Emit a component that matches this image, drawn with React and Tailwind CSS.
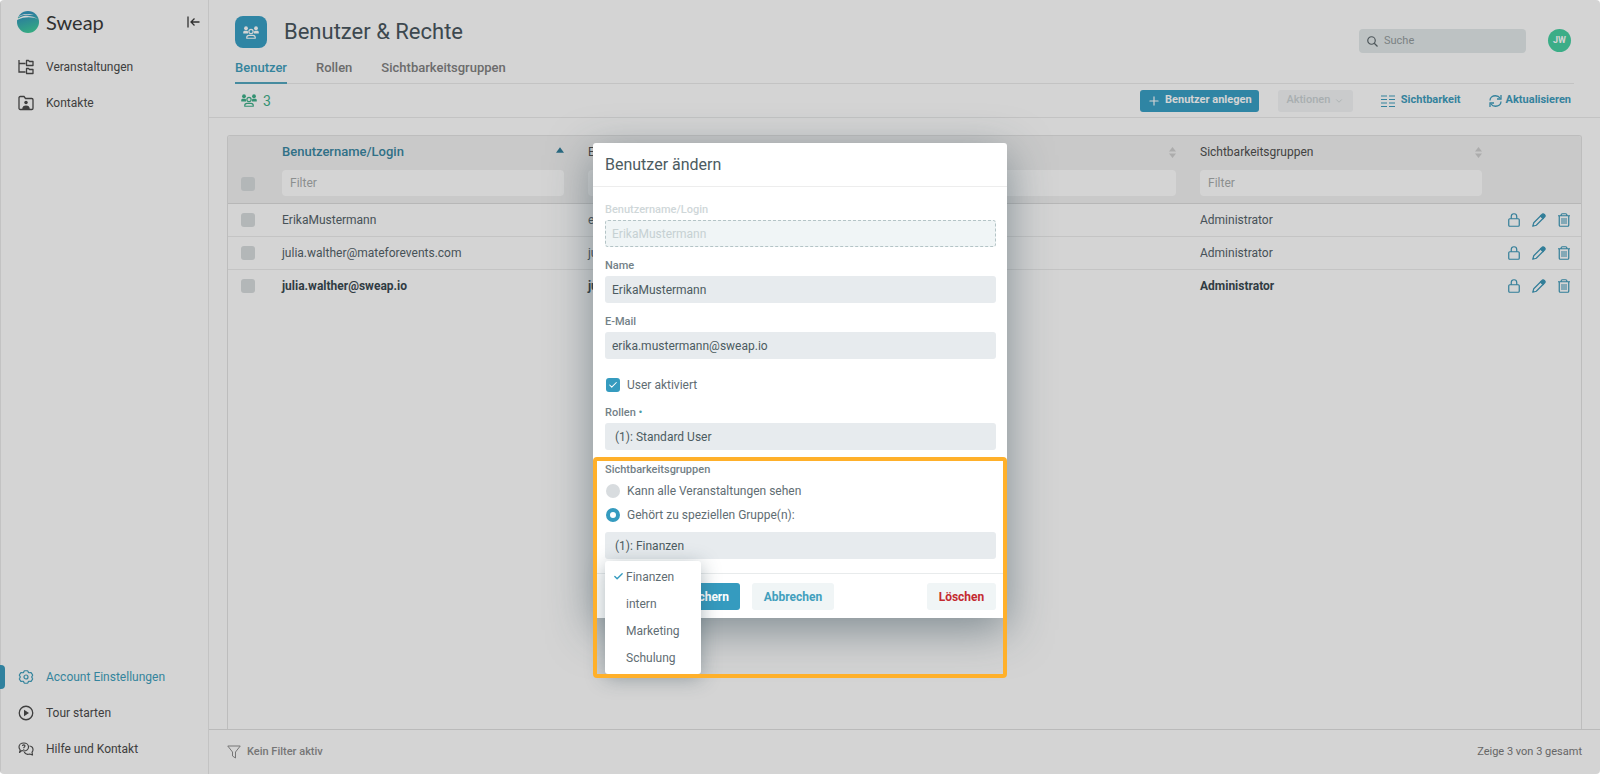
import React, { useState } from 'react';
import { ChevronDown, Plus, Check } from 'lucide-react';

const UsersIcon = ({ className }) => (
  <svg className={className} viewBox="0 0 32 26" fill="none">
    <g fill="currentColor">
      <circle cx="6" cy="4.5" r="3.8" />
      <circle cx="26" cy="4.5" r="3.8" />
      <path d="M0.5 15v-2.5C0.5 10.5 2 9.6 4 9.6h4.5L10 11v4z" />
      <path d="M31.500 15v-2.5c0-2-1.500-2.900-3.500-2.900h-4.500L22 11v4z" />
    </g>
    <circle cx="16" cy="11" r="4.200" stroke="currentColor" strokeWidth="2.400" />
    <path d="M7.500 24.500v-1.500c0-2.600 2-4.200 4.500-4.200h8c2.500 0 4.500 1.600 4.500 4.200v1.500z" stroke="currentColor" strokeWidth="2.400" strokeLinejoin="round" />
  </svg>
);

const SweapLogo = () => (
  <svg className="size-[22px]" viewBox="0 0 44 44">
    <defs>
      <linearGradient id="globe" x1="0.3" y1="0" x2="0.6" y2="1">
        <stop offset="0.2" stopColor="#3498bd" />
        <stop offset="1" stopColor="#41cf9c" />
      </linearGradient>
    </defs>
    <circle cx="22" cy="22" r="22" fill="url(#globe)" />
    <path d="M0 14C8 5 20 4 34 8c-8-.5-14 0-19 2 11-1 20 1 28 7-10-5-26-7-43 1z" fill="#fff" />
    <path d="M2 13C9 8 16 7 24 8 15 9 8 11 2 15z" fill="url(#globe)" />
  </svg>
);

const CollapseIcon = () => (
  <svg className="h-3 w-[13px]" viewBox="0 0 26 24" fill="none" stroke="currentColor" strokeWidth="2.600">
    <path d="M2 1v22M25 12H8M15 5l-7 7 7 7" />
  </svg>
);

const EventsIcon = () => (
  <svg className="size-4" viewBox="0 0 32 32" fill="none" stroke="currentColor" strokeWidth="2.600">
    <path d="M2 2v24h13M2 9h13" />
    <path d="M17 3h4l2 2h7v8H17zM17 19h4l2 2h7v8H17z" strokeLinejoin="round" />
  </svg>
);

const ContactsIcon = () => (
  <svg className="size-4" viewBox="0 0 32 32" fill="none">
    <path d="M2 5.500C2 4 3 3 4.500 3H12l3 4h12.500C29 7 30 8 30 9.500v17c0 1.500-1 2.500-2.500 2.500h-23C3 29 2 28 2 26.500z" stroke="currentColor" strokeWidth="2.600" />
    <circle cx="16" cy="15" r="3.500" fill="currentColor" />
    <path d="M8.500 28c0-5 3-7 7.500-7s7.500 2 7.500 7z" fill="currentColor" />
  </svg>
);

const GearIcon = () => (
  <svg className="size-4" viewBox="0 0 32 32" fill="none" stroke="currentColor" strokeWidth="2.400" strokeLinejoin="round">
    <path d="M13 3.500h6c1 0 1 3 2.500 3.800 1.500.8 4-.8 4.800 0l3 4.700c.5 1-1.800 2.500-1.800 4s2.300 3 1.800 4l-3 4.700c-.8.8-3.300-.8-4.800 0-1.500.8-1.500 3.800-2.500 3.800h-6c-1 0-1-3-2.500-3.800-1.500-.8-4 .8-4.800 0l-3-4.700c-.5-1 1.800-2.500 1.800-4s-2.300-3-1.800-4l3-4.700c.8-.8 3.300.8 4.800 0C12 6.500 12 3.500 13 3.500z" />
    <circle cx="16" cy="16" r="4" />
  </svg>
);

const PlayIcon = () => (
  <svg className="size-4" viewBox="0 0 32 32" fill="none">
    <circle cx="16" cy="16" r="13.500" stroke="currentColor" strokeWidth="2.600" />
    <path d="M12 9.500v13L22 16z" fill="currentColor" />
  </svg>
);

const HelpIcon = () => (
  <svg className="size-4" viewBox="0 0 32 32" fill="none" stroke="currentColor" strokeWidth="2.300" strokeLinejoin="round">
    <path d="M3 23l1.500-5C2.500 15.500 2 14 2 12c0-4.500 4-8 9.500-8S21 7.500 21 12s-4 8-9.500 8c-2 0-3-.3-4-.8z" />
    <path d="M23 10c4 .5 7 3.500 7 7.500 0 2-.5 3.500-2 5l1 5.500-5.500-2c-5 1.500-9.500-.5-11-4" />
    <path d="M9 10c0-3 5-3 5 0 0 1.500-2.500 2-2.500 4M11.500 15.500v1.800" />
  </svg>
);

const ColumnsIcon = () => (
  <svg className="h-3 w-[14px]" viewBox="0 0 28 24" stroke="currentColor" strokeWidth="2.200">
    <path d="M0 2h12M16 2h12M0 9h12M16 9h12M0 16h12M16 16h12M0 23h12M16 23h12" />
  </svg>
);

const RefreshIcon = () => (
  <svg className="h-3 w-[13px]" viewBox="0 0 26 24" fill="none" stroke="currentColor" strokeWidth="2.600">
    <path d="M2 11C2 5 7 1.500 13 1.500c4 0 7 1.500 9 4.500M24 13c0 6-5 9.500-11 9.500-4 0-7-1.500-9-4.500" />
    <path d="M24 0v8h-8M2 24v-8h8" />
  </svg>
);

const LockIcon = () => (
  <svg className="h-[14px] w-3" viewBox="0 0 24 28" fill="none" stroke="currentColor" strokeWidth="2.400">
    <rect x="1.500" y="11.500" width="21" height="15" rx="2" />
    <path d="M6.500 11.500V7c0-3.500 2-5.500 5.500-5.500S17.500 3.500 17.500 7v4.500" />
  </svg>
);

const PencilIcon = () => (
  <svg className="size-[14px]" viewBox="0 0 28 28" fill="none" stroke="currentColor" strokeWidth="2.400" strokeLinejoin="round">
    <path d="M1.500 26.500l2-7L18 5l5 5L8.500 24.500z" />
    <path d="M17 6l4-4c2-1.500 6.500 2.500 5 5l-4 4z" fill="currentColor" />
  </svg>
);

const TrashIcon = () => (
  <svg className="h-[14px] w-3" viewBox="0 0 24 28" fill="none" stroke="currentColor" strokeWidth="2.400">
    <path d="M0 5.500h24M6 5c0-2.500 1-3.500 3-3.500h6c2 0 3 1 3 3.500M2.500 6v18.500c0 1.500.5 2 2 2h15c1.500 0 2-.5 2-2V6" />
    <path d="M8 10v12M12 10v12M16 10v12" strokeWidth="2" />
  </svg>
);

const FilterIcon = () => (
  <svg className="size-[14px]" viewBox="0 0 28 28" fill="none" stroke="currentColor" strokeWidth="2" strokeLinejoin="round">
    <path d="M1.500 2h25L17 14v12l-6-4v-8z" />
  </svg>
);

const SearchIcon = () => (
  <svg className="size-[11px]" viewBox="0 0 22 22" fill="none" stroke="currentColor" strokeWidth="2.400">
    <circle cx="9" cy="9" r="7.500" />
    <path d="M14.500 14.500L21 21" />
  </svg>
);

const SortIcon = () => (
  <svg className="h-[11px] w-[7px] text-[#cfcfcf]" viewBox="0 0 14 22" fill="currentColor">
    <path d="M7 0l7 9H0zM7 22l7-9H0z" />
  </svg>
);

const topNav = [
  { label: 'Veranstaltungen', icon: EventsIcon },
  { label: 'Kontakte', icon: ContactsIcon },
];

const bottomNav = [
  { label: 'Account Einstellungen', icon: GearIcon, active: true },
  { label: 'Tour starten', icon: PlayIcon },
  { label: 'Hilfe und Kontakt', icon: HelpIcon },
];

const columns = ['Benutzername/Login', 'E-Mail', 'Rollen', 'Sichtbarkeitsgruppen'];

const users = [
  { login: 'ErikaMustermann', email: 'erika.mustermann@sweap.io', role: 'Standard User', group: 'Administrator' },
  { login: 'julia.walther@mateforevents.com', email: 'julia.walther@mateforevents.com', role: 'Administrator', group: 'Administrator' },
  { login: 'julia.walther@sweap.io', email: 'julia.walther@sweap.io', role: 'Administrator', group: 'Administrator', current: true },
];

const groups = ['Finanzen', 'intern', 'Marketing', 'Schulung'];

const NavItem = ({ label, icon: Icon, active }) => (
  <a
    href="#"
    className={`relative flex h-9 items-center gap-3 pl-[17px] text-xs ${active ? 'text-[#3f9fbd]' : 'text-[#4c4c4c]'}`}
  >
    {active && <span className="absolute inset-y-[6px] -left-px w-[5px] rounded-r-sm bg-[#3a9cbf]" />}
    <Icon />
    {label}
  </a>
);

const Sidebar = () => (
  <aside className="flex w-[209px] shrink-0 flex-col border-x border-[#ebebeb]">
    <div className="flex items-center justify-between pt-[11px] pr-2 pl-4 text-[#3c3c3c]">
      <div className="flex items-center gap-[7px]">
        <SweapLogo />
        <span className="font-[Lato,sans-serif] text-xl leading-[22px]">Sweap</span>
      </div>
      <button type="button" aria-label="Menü einklappen"><CollapseIcon /></button>
    </div>
    <nav className="mt-4">
      {topNav.map(item => <NavItem key={item.label} {...item} />)}
    </nav>
    <nav className="mt-auto mb-[7px]">
      {bottomNav.map(item => <NavItem key={item.label} {...item} />)}
    </nav>
  </aside>
);

const RowCheckbox = ({ label }) => (
  <input type="checkbox" aria-label={label} className="block size-[14px] appearance-none rounded-[3px] bg-[#d8dcde]" />
);

const UserTable = () => (
  <table className="w-full table-fixed text-left text-xs">
    <thead className="bg-[#f2f2f2]">
      <tr className="border-b border-[#dcdcdc]">
        <th className="w-[54px] pt-[29px] pl-[13px]"><RowCheckbox label="Alle auswählen" /></th>
        {columns.map((name, i) => (
          <th key={name} className="pt-2 pr-6 pb-[7px] font-normal text-[#505050]">
            <div className="flex h-4 items-center justify-between">
              {i === 0 ? (
                <>
                  <span className="text-[13px] font-medium text-[#3a88a3]">{name}</span>
                  <svg className="mb-[5px] h-[6px] w-2 text-[#327f9b]" viewBox="0 0 14 10" fill="currentColor"><path d="M7 0l7 10H0z" /></svg>
                </>
              ) : (
                <>
                  <span>{name}</span>
                  <SortIcon />
                </>
              )}
            </div>
            <input
              aria-label={`${name} filtern`}
              placeholder="Filter"
              className="mt-[10px] block h-[26px] w-full rounded-sm bg-white px-2 placeholder:text-[#a9adad]"
            />
          </th>
        ))}
        <th className="w-[75px]"></th>
      </tr>
    </thead>
    <tbody>
      {users.map(user => (
        <tr
          key={user.login}
          className={`h-[33px] ${user.current ? 'font-bold text-[#3a4951]' : 'border-b border-[#ececec] text-[#55636a]'}`}
        >
          <td className="pl-[13px]"><RowCheckbox label={`${user.login} auswählen`} /></td>
          <td>{user.login}</td>
          <td>{user.email}</td>
          <td>{user.role}</td>
          <td>{user.group}</td>
          <td>
            <div className="flex items-center gap-3 pl-[2px] text-[#3d98b8]">
              <button type="button" aria-label="Sperren"><LockIcon /></button>
              <button type="button" aria-label="Bearbeiten"><PencilIcon /></button>
              <button type="button" aria-label="Löschen"><TrashIcon /></button>
            </div>
          </td>
        </tr>
      ))}
    </tbody>
  </table>
);

const fieldClass = 'block h-[27px] w-full appearance-none rounded-[3px] bg-[#e7ebee] text-left text-xs text-[#4c5b61]';
const labelClass = 'mb-[2px] block text-[11px] leading-4 font-medium text-[#738187]';

const EditUserDialog = () => {
  const [group, setGroup] = useState('Finanzen');
  const [allEvents, setAllEvents] = useState(false);

  return (
    <div
      role="dialog"
      aria-labelledby="dialog-title"
      className="relative w-[414px] rounded-[3px] bg-white shadow-[0_12px_44px_rgba(45,70,82,0.5)]"
    >
      <h2 id="dialog-title" className="flex h-[44px] items-center border-b border-[#ededed] px-3 text-base text-[#4c5b61]">
        Benutzer ändern
      </h2>

      <form className="pt-[15px] pr-[11px] pl-3">
        <div className="space-y-[11px]">
          <div>
            <label htmlFor="login" className="mb-[2px] block text-[11px] leading-4 font-medium text-[#cfd7d9]">Benutzername/Login</label>
            <input
              id="login"
              disabled
              defaultValue="ErikaMustermann"
              className="block h-[27px] w-full rounded-[3px] border border-dashed border-[#b4c4c6] bg-[#f0f5f6] px-[6px] text-xs text-[#c6d1d3]"
            />
          </div>
          <div>
            <label htmlFor="name" className={labelClass}>Name</label>
            <input id="name" defaultValue="ErikaMustermann" className={`${fieldClass} px-[7px]`} />
          </div>
          <div>
            <label htmlFor="email" className={labelClass}>E-Mail</label>
            <input id="email" defaultValue="erika.mustermann@sweap.io" className={`${fieldClass} px-[7px]`} />
          </div>
        </div>

        <label className="mt-4 flex h-5 items-center gap-[7px] text-xs text-[#5f6d73]">
          <span className="grid">
            <input type="checkbox" defaultChecked className="peer col-start-1 row-start-1 ml-px size-[14px] appearance-none rounded-[3px] bg-[#d8dcdf] checked:bg-[#359bbf]" />
            <Check className="pointer-events-none invisible col-start-1 row-start-1 ml-[3px] size-[10px] self-center text-white peer-checked:visible" strokeWidth={2.5} />
          </span>
          User aktiviert
        </label>

        <div className="mt-[10px]">
          <label htmlFor="roles" className={labelClass}>Rollen <span className="text-[#4f9aa5]">•</span></label>
          <select id="roles" className={`${fieldClass} px-[10px]`}>
            <option>(1): Standard User</option>
          </select>
        </div>

        <fieldset className="mt-3">
          <legend className="mb-[3px] text-[11px] leading-4 font-medium text-[#738187]">Sichtbarkeitsgruppen</legend>
          <div className="space-y-1 text-xs text-[#5f6d73]">
            <label className="flex h-5 items-center gap-[7px]">
              <input
                type="radio"
                name="visibility"
                checked={allEvents}
                onChange={() => setAllEvents(true)}
                className="ml-px size-[14px] appearance-none rounded-full bg-[#d8dcdf] checked:border-[4px] checked:border-[#359bbf] checked:bg-white"
              />
              Kann alle Veranstaltungen sehen
            </label>
            <label className="flex h-5 items-center gap-[7px]">
              <input
                type="radio"
                name="visibility"
                checked={!allEvents}
                onChange={() => setAllEvents(false)}
                className="ml-px size-[14px] appearance-none rounded-full bg-[#d8dcdf] checked:border-[4px] checked:border-[#359bbf] checked:bg-white"
              />
              Gehört zu speziellen Gruppe(n):
            </label>
          </div>
          <div className="relative mt-[7px]">
            <button type="button" aria-haspopup="listbox" className={`${fieldClass} px-[10px]`}>(1): {group}</button>
            <ul
              role="listbox"
              aria-label="Gruppen"
              className="absolute top-[29px] left-0 z-10 w-24 rounded-[3px] bg-white pt-[2px] pb-[3px] text-xs text-[#5f6d73] shadow-[0_4px_20px_rgba(45,70,82,0.4)]"
            >
              {groups.map(name => (
                <li
                  key={name}
                  role="option"
                  aria-selected={name === group}
                  onClick={() => setGroup(name)}
                  className="flex h-[27px] items-center pl-2"
                >
                  <span className="w-[13px]">
                    {name === group && <Check className="size-[11px] text-[#359bbf]" strokeWidth={3} />}
                  </span>
                  {name}
                </li>
              ))}
            </ul>
          </div>
        </fieldset>
      </form>

      <div className="mt-[14px] flex gap-3 border-t border-[#e8ebec] pt-[9px] pr-[11px] pb-2 pl-3 text-xs font-bold">
        <button type="submit" className="h-[27px] w-[135px] rounded-[3px] bg-[#359bbf] pr-[11px] text-right text-white">Änderungen speichern</button>
        <button type="button" className="h-[27px] w-[82px] rounded-[3px] bg-[#f0f5f6] text-[#429fbd]">Abbrechen</button>
        <button type="button" className="ml-auto h-[27px] w-[69px] rounded-[3px] bg-[#f0f5f6] text-[#c42a30]">Löschen</button>
      </div>

      {/* Highlight frame around the visibility groups */}
      <div className="pointer-events-none absolute inset-x-0 top-[314px] -bottom-[60px] z-20 rounded-[4px] border-4 border-[#ffb02a]" />
    </div>
  );
};

const App = () => {
  return (
    <div className="h-screen bg-white pb-px font-[Roboto,sans-serif]">
      <div className="relative flex h-full overflow-hidden rounded-[4px]">
        <Sidebar />

        <main className="flex min-w-0 flex-1 flex-col">
          <header className="mx-[26px] flex justify-between border-b border-[#ebebeb]">
            <div className="pt-4">
              <div className="flex h-8 items-center gap-[17px]">
                <div className="flex size-8 items-center justify-center rounded-lg bg-[#39a0c6] text-white">
                  <UsersIcon className="h-[13px] w-4" />
                </div>
                <h1 className="text-[22px] leading-8 text-[#4a5760]">Benutzer &amp; Rechte</h1>
              </div>
              <nav className="-mb-px flex h-9 items-end gap-[29px] text-[13px] leading-5 font-medium text-[#828282]">
                <a href="#" className="border-b-2 border-[#55a8c0] pb-1 text-[#3f9fbd]">Benutzer</a>
                <a href="#" className="border-b-2 border-transparent pb-1">Rollen</a>
                <a href="#" className="border-b-2 border-transparent pb-1">Sichtbarkeitsgruppen</a>
              </nav>
            </div>
            <div className="flex items-start gap-[22px] pt-[29px] pr-[3px]">
              <label className="flex h-6 w-[167px] items-center gap-[6px] rounded-sm bg-[#e4eaeb] px-2 text-[11px] text-[#5d686d]">
                <SearchIcon />
                <input type="search" aria-label="Suche" placeholder="Suche" className="min-w-0 flex-1 bg-transparent placeholder:text-[#949c9e]" />
              </label>
              <button type="button" className="size-[23px] rounded-full bg-[#47d1a3] text-[9px] font-bold text-white">JW</button>
            </div>
          </header>

          <div className="flex h-[34px] items-center justify-between border-b border-[#ebebeb] pr-[29px] pl-8">
            <div className="flex items-center gap-[6px] text-sm text-[#3fb08a]">
              <UsersIcon className="h-[13px] w-4" />
              3
            </div>
            <div className="flex items-center text-[11px] font-bold">
              <button type="button" className="flex h-[22px] w-[119px] items-center justify-center gap-1 rounded-[3px] bg-[#39a0c6] text-white">
                <Plus className="size-[14px]" strokeWidth={2} />
                Benutzer anlegen
              </button>
              <button type="button" disabled className="ml-[19px] flex h-[22px] w-[75px] items-center justify-center gap-1 rounded-[3px] bg-[#f3f5f6] font-medium text-[#cbd2d4]">
                Aktionen
                <ChevronDown className="size-[10px]" />
              </button>
              <button type="button" className="ml-7 flex items-center gap-[6px] text-[#3f9dbd]">
                <ColumnsIcon />
                Sichtbarkeit
              </button>
              <button type="button" className="ml-7 flex items-center gap-1 text-[#3f9dbd]">
                <RefreshIcon />
                Aktualisieren
              </button>
            </div>
          </div>

          <div className="flex min-h-0 flex-1 px-[18px] pt-[17px]">
            <div className="flex-1 overflow-hidden rounded-t-[3px] border border-b-0 border-[#e4e4e4]">
              <UserTable />
            </div>
          </div>

          <footer className="flex h-[45px] shrink-0 items-center justify-between border-t border-[#e0e0e0] px-[18px] text-[11px] text-[#7b7b7b]">
            <button type="button" className="flex items-center gap-[6px] font-medium text-[#8f8f8f]">
              <FilterIcon />
              Kein Filter aktiv
            </button>
            <span>Zeige 3 von 3 gesamt</span>
          </footer>
        </main>

        {/* Overlay with the dialog */}
        <div className="absolute inset-0 z-10 flex items-start justify-center bg-black/17 pt-[143px]">
          <EditUserDialog />
        </div>
      </div>
    </div>
  );
};

export default App;
